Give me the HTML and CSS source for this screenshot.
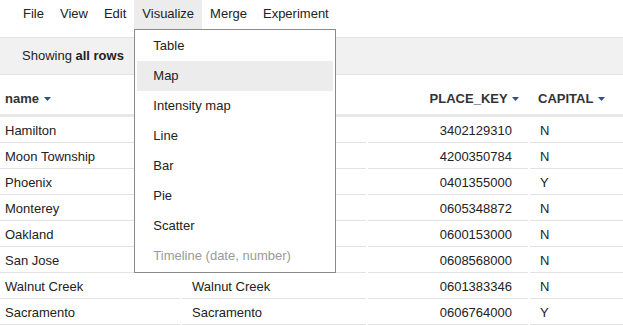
FILE: index.html
```html
<!DOCTYPE html>
<html lang="en">
<head>
    <meta charset="UTF-8">
    <title>Fusion Table</title>
    <link rel="stylesheet" href="styles.css">
</head>
<body>

    <div class="menubar">
        <span class="menu-item">File</span>
        <span class="menu-item">View</span>
        <span class="menu-item">Edit</span>
        <span class="menu-item menu-open">Visualize
            <div class="dropdown">
                <div class="dropdown-item">Table</div>
                <div class="dropdown-item active">Map</div>
                <div class="dropdown-item">Intensity map</div>
                <div class="dropdown-item">Line</div>
                <div class="dropdown-item">Bar</div>
                <div class="dropdown-item">Pie</div>
                <div class="dropdown-item">Scatter</div>
                <div class="dropdown-item disabled">Timeline (date, number)</div>
            </div>
        </span>
        <span class="menu-item">Merge</span>
        <span class="menu-item">Experiment</span>
    </div>

    <div class="toolbar">Showing <b>all rows</b></div>

    <table class="data">
        <colgroup>
            <col class="col-name">
            <col class="col-city">
            <col class="col-key">
            <col>
        </colgroup>
        <thead>
            <tr>
                <th>name <svg class="sort" width="7" height="4" viewBox="0 0 7 4"><path d="M0 0H7L3.5 4Z"/></svg></th>
                <th></th>
                <th class="num">PLACE_KEY <svg class="sort" width="7" height="4" viewBox="0 0 7 4"><path d="M0 0H7L3.5 4Z"/></svg></th>
                <th>CAPITAL <svg class="sort" width="7" height="4" viewBox="0 0 7 4"><path d="M0 0H7L3.5 4Z"/></svg></th>
            </tr>
        </thead>
        <tbody>
            <tr><td>Hamilton</td><td>Hamilton</td><td class="num">3402129310</td><td>N</td></tr>
            <tr><td>Moon Township</td><td>Moon Township</td><td class="num">4200350784</td><td>N</td></tr>
            <tr><td>Phoenix</td><td>Phoenix</td><td class="num">0401355000</td><td>Y</td></tr>
            <tr><td>Monterey</td><td>Monterey</td><td class="num">0605348872</td><td>N</td></tr>
            <tr><td>Oakland</td><td>Oakland</td><td class="num">0600153000</td><td>N</td></tr>
            <tr><td>San Jose</td><td>San Jose</td><td class="num">0608568000</td><td>N</td></tr>
            <tr><td>Walnut Creek</td><td>Walnut Creek</td><td class="num">0601383346</td><td>N</td></tr>
            <tr><td>Sacramento</td><td>Sacramento</td><td class="num">0606764000</td><td>Y</td></tr>
        </tbody>
    </table>

</body>
</html>
```

FILE: styles.css
```css
:root {
    --text-color: #222;
    --line-color: #e3e3e3;
    --hover-color: #ececec;
    --sort-color: #2f4f8f;
}
body {
    font-family: "Liberation Sans", Arial, sans-serif;
    font-size: 13px;
    color: var(--text-color);
    background: white;
    margin: 0;
    overflow: hidden;
}
.menubar {
    display: flex;
    padding-left: 15px;
    height: 29px;
}
.menu-item {
    position: relative;
    padding: 0 8px;
    line-height: 28px;
}
.menu-open { background: var(--hover-color); }
.dropdown {
    position: absolute;
    top: 29px;
    left: 0;
    width: 196px;
    padding: 1px 2px;
    background: white;
    border: 1px solid #8a8a8a;
    z-index: 10;
}
.dropdown-item {
    height: 30px;
    line-height: 30px;
    padding-left: 16px;
    white-space: nowrap;
}
.dropdown-item.active { background: var(--hover-color); }
.dropdown-item.disabled { color: #9a9a9a; }
.toolbar {
    margin-top: 8px;
    height: 36px;
    line-height: 36px;
    padding-left: 22px;
    background: #f1f1f1;
    border-top: 1px solid var(--line-color);
    border-bottom: 1px solid var(--line-color);
}
.data {
    width: 100%;
    table-layout: fixed;
    border-collapse: separate;
    border-spacing: 0;
}
.col-name { width: 180px; }
.col-city { width: 186px; }
.col-key { width: 162px; }
th {
    height: 31px;
    padding: 0 10px 8px;
    vertical-align: bottom;
    text-align: left;
    font-weight: bold;
    color: #333;
    border-bottom: 3px solid #e8e8e8;
}
th:first-child { padding-left: 5px; }
th.num { text-align: right; padding-right: 9px; }
.sort { fill: var(--sort-color); vertical-align: 2px; margin-left: 1px; }
td {
    height: 26px;
    padding: 0 10px;
    white-space: nowrap;
    box-shadow: inset 0 -1px var(--line-color);
}
td:first-child { padding-left: 5px; }
td + td { border-left: 2px solid white; }
td.num { text-align: right; padding-right: 16px; }
```
